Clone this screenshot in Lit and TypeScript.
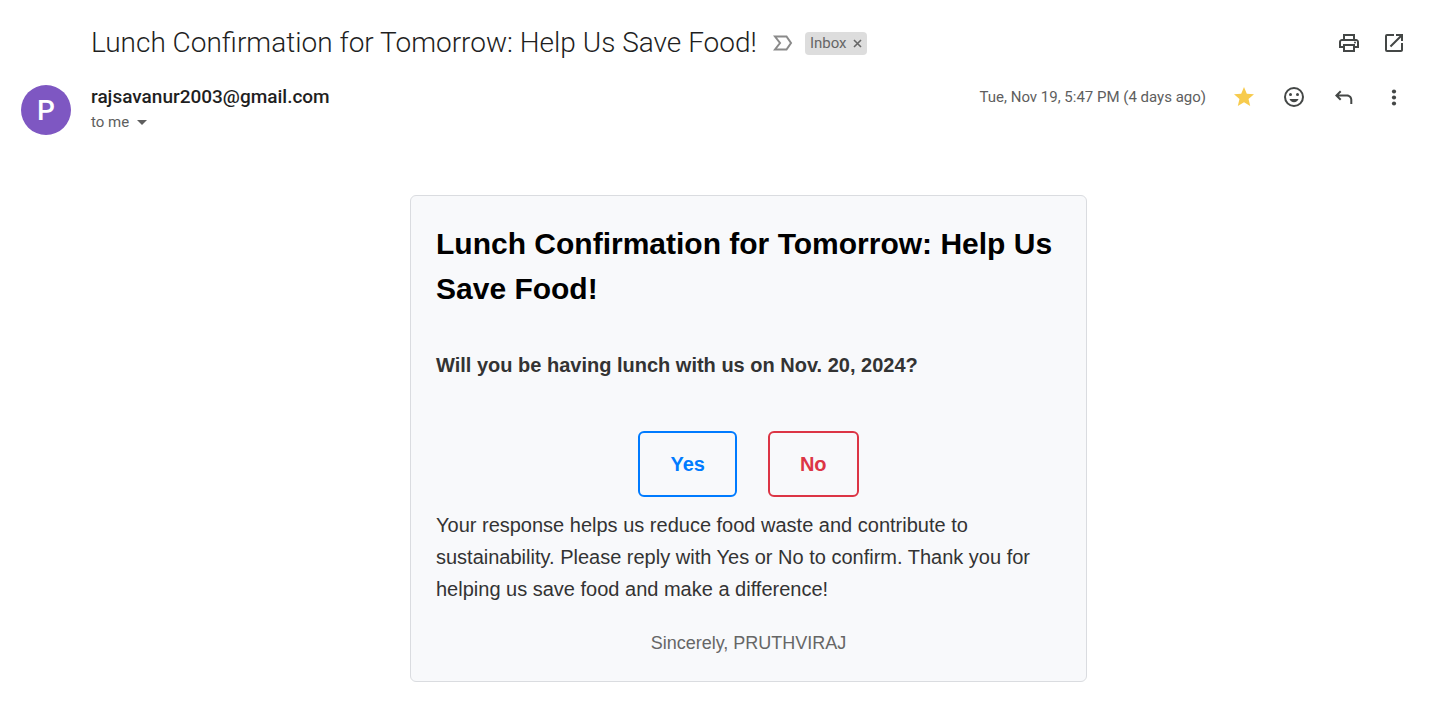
import { LitElement, html, css, svg } from "lit";
import { customElement } from "lit/decorators.js";

const icon = (size: number, body: unknown) => html`
  <svg width=${size} height=${size} viewBox="0 0 24 24" fill="currentColor" aria-hidden="true">${body}</svg>
`;

const printIcon = svg`<path d="M19 8h-1V3H6v5H5c-1.66 0-3 1.34-3 3v6h4v4h12v-4h4v-6c0-1.66-1.34-3-3-3zM8 5h8v3H8V5zm8 14H8v-4h8v4zm2-4v-2H6v2H4v-4c0-.55.45-1 1-1h14c.55 0 1 .45 1 1v4h-2z"/><circle cx="18" cy="11.5" r="1"/>`;
const openIcon = svg`<path d="M19 19H5V5h7V3H5a2 2 0 0 0-2 2v14a2 2 0 0 0 2 2h14c1.1 0 2-.9 2-2v-7h-2v7zM14 3v2h3.59l-9.83 9.83 1.41 1.41L19 6.41V10h2V3h-7z"/>`;
const starIcon = svg`<path d="M12 17.27 18.18 21l-1.64-7.03L22 9.24l-7.19-.61L12 2 9.19 8.63 2 9.24l5.46 4.73L5.82 21z"/>`;
const smileIcon = svg`<path d="M12 2a10 10 0 1 0 0 20 10 10 0 0 0 0-20zm0 18a8 8 0 1 1 0-16 8 8 0 0 1 0 16z"/><circle cx="8.5" cy="9.5" r="1.5"/><circle cx="15.5" cy="9.5" r="1.5"/><path d="M7.500 14h9c-.6 1.900-2.300 3.200-4.500 3.200S8.100 15.900 7.500 14z"/>`;
const replyIcon = svg`<path d="M8 5.500 3 10.500l5 5 1.400-1.400-2.600-2.600H15c1.900 0 3.300 1.400 3.300 3.300V19h2v-4.200c0-3-2.300-5.300-5.300-5.300H6.800l2.600-2.600z"/>`;
const moreIcon = svg`<circle cx="12" cy="6.500" r="2.100"/><circle cx="12" cy="12.500" r="2.100"/><circle cx="12" cy="18.500" r="2.100"/>`;

@customElement("app-root")
export class AppRoot extends LitElement {
  static styles = css`
    :host {
      display: block;
      min-height: 100vh;
      box-sizing: border-box;
      padding: 23px 23px 37px 21px;
      background: #fff;
      color: #1f1f1f;
      font-family: Roboto, "Liberation Sans", sans-serif;
    }
    button {
      margin: 0;
      padding: 0;
      border: 0;
      background: none;
      color: inherit;
      font: inherit;
      cursor: pointer;
    }
    svg {
      display: block;
    }
    .subject,
    .message {
      margin-left: 70px;
    }
    .subject {
      display: flex;
      align-items: center;
      gap: 12px;
    }
    .title {
      margin: 0;
      font: 300 28px/40px "Google Sans", Roboto, sans-serif;
    }
    .important {
      margin-left: 4px;
      color: #8a8a8a;
    }
    .label {
      display: flex;
      align-items: center;
      gap: 6px;
      padding: 0 5px;
      border-radius: 4px;
      background: #ddd;
      color: #666;
      font-size: 15px;
      line-height: 23px;
    }
    .tools {
      display: flex;
      gap: 21px;
      margin-left: auto;
      color: #444746;
    }
    .sender {
      display: flex;
      align-items: flex-start;
      gap: 20px;
      margin-top: 22px;
    }
    .avatar {
      display: grid;
      place-items: center;
      width: 50px;
      height: 50px;
      border-radius: 50%;
      background: #7e57c2;
      color: #fff;
      font-size: 28px;
      font-weight: 500;
    }
    .email {
      font-size: 19px;
      font-weight: 500;
      line-height: 24px;
    }
    .to {
      display: flex;
      align-items: center;
      gap: 8px;
      color: #5e5e5e;
      font-size: 15px;
      line-height: 26px;
    }
    .meta {
      display: flex;
      align-items: center;
      gap: 26px;
      margin-left: auto;
      color: #444746;
    }
    .date {
      color: #5e5e5e;
      font-size: 15px;
      line-height: 24px;
    }
    .star {
      color: #f7cb4d;
    }
    .message {
      margin-top: 60px;
    }
    .card {
      box-sizing: border-box;
      max-width: 677px;
      margin: 0 auto;
      padding: 25px;
      border: 1px solid #dadce0;
      border-radius: 6px;
      background: #f8f9fb;
      color: #333;
      font: 20px/32px "Liberation Sans", Arial, sans-serif;
    }
    .heading {
      margin: 0 0 38px;
      color: #000;
      font-size: 30px;
      line-height: 45px;
    }
    .question {
      margin: 0 0 50px;
      font-weight: 700;
    }
    .answers {
      display: flex;
      justify-content: center;
      gap: 31px;
      margin-bottom: 12px;
    }
    .answer {
      padding: 15px 30px;
      border: 2px solid;
      border-radius: 6px;
      font-weight: 700;
    }
    .yes {
      color: #007bff;
    }
    .no {
      color: #dc3545;
    }
    .note {
      margin: 0 0 25px;
    }
    .sign {
      margin: 0;
      color: #666;
      font-size: 18px;
      line-height: 26px;
      text-align: center;
    }
  `;

  render() {
    return html`
      <header class="subject">
        <h1 class="title">Lunch Confirmation for Tomorrow: Help Us Save Food!</h1>
        <button class="important" aria-label="Mark as important">
          <svg width="20" height="16" viewBox="0 0 20 16" fill="none" stroke="currentColor" stroke-width="2" aria-hidden="true">
            <path d="M2 1.500h11.500L18 8l-4.500 6.500H2L7 8z" />
          </svg>
        </button>
        <span class="label">
          Inbox
          <button aria-label="Remove label Inbox">
            <svg width="9" height="9" viewBox="0 0 9 9" stroke="currentColor" stroke-width="1.600" aria-hidden="true">
              <path d="M1 1l7 7M8 1l-7 7" />
            </svg>
          </button>
        </span>
        <div class="tools">
          <button aria-label="Print all">${icon(24, printIcon)}</button>
          <button aria-label="Open in new window">${icon(24, openIcon)}</button>
        </div>
      </header>
      <section class="sender">
        <div class="avatar">P</div>
        <div>
          <div class="email">rajsavanur2003@gmail.com</div>
          <div class="to">
            to me
            <button aria-label="Show details">
              <svg width="10" height="5" viewBox="0 0 10 5" fill="currentColor" aria-hidden="true"><path d="M0 0h10L5 5z" /></svg>
            </button>
          </div>
        </div>
        <div class="meta">
          <time class="date" datetime="2024-11-19T17:47">Tue, Nov 19, 5:47 PM (4 days ago)</time>
          <button class="star" aria-label="Starred">${icon(24, starIcon)}</button>
          <button aria-label="Add reaction">${icon(24, smileIcon)}</button>
          <button aria-label="Reply">${icon(24, replyIcon)}</button>
          <button aria-label="More">${icon(24, moreIcon)}</button>
        </div>
      </section>
      <main class="message">
        <article class="card">
          <h2 class="heading">Lunch Confirmation for Tomorrow: Help Us Save Food!</h2>
          <p class="question">Will you be having lunch with us on Nov. 20, 2024?</p>
          <div class="answers">
            <button class="answer yes">Yes</button>
            <button class="answer no">No</button>
          </div>
          <p class="note">
            Your response helps us reduce food waste and contribute to sustainability. Please reply with Yes or No to
            confirm. Thank you for helping us save food and make a difference!
          </p>
          <p class="sign">Sincerely, PRUTHVIRAJ</p>
        </article>
      </main>
    `;
  }
}
